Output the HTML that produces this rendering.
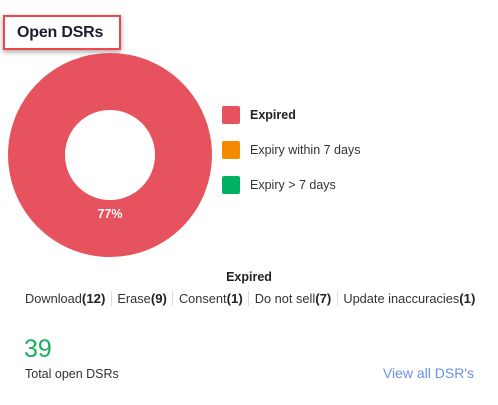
<!DOCTYPE html>
<html><head><meta charset="utf-8"><style>
body{margin:0;width:498px;height:405px;background:#fff;font-family:"Liberation Sans",sans-serif;color:#222;position:relative;overflow:hidden}
.a{position:absolute;white-space:nowrap}
.title{left:3px;top:15px;width:114px;height:31px;border:2px solid #f0474a;box-shadow:0 2px 5px rgba(0,0,0,.35);}
.title span{position:absolute;left:12px;top:7px;font-size:16px;font-weight:bold;color:#1d1d2b;letter-spacing:-0.2px}
.sq{position:absolute;left:222px;width:18px;height:18px;border-radius:2px}
.lg{left:250px;font-size:12.5px;color:#333}
.row{left:25px;top:291px;font-size:12.8px;color:#333}
.row b{font-size:13.2px;color:#222}
.sep{display:inline-block;width:1px;height:15px;background:#ddd;vertical-align:-3px;margin:0 5.5px}
</style></head><body>
<div class="a title"><span>Open DSRs</span></div>
<svg class="a" style="left:0;top:0" width="240" height="270">
<circle cx="110" cy="155" r="73.5" fill="none" stroke="#e6525d" stroke-width="57"/>
<text x="110" y="218" text-anchor="middle" font-family="Liberation Sans" font-weight="bold" font-size="12.5" fill="#fff">77%</text>
</svg>
<div class="sq" style="top:106px;background:#e6525d"></div>
<div class="sq" style="top:141px;background:#f48a00"></div>
<div class="sq" style="top:176px;background:#00b262"></div>
<div class="a lg" style="top:108px;font-weight:bold;color:#222">Expired</div>
<div class="a lg" style="top:143px">Expiry within 7 days</div>
<div class="a lg" style="top:178px">Expiry &gt; 7 days</div>
<div class="a" style="left:0;width:498px;text-align:center;top:270px;font-size:12.5px;font-weight:bold;color:#222">Expired</div>
<div class="a row">Download<b>(12)</b><span class="sep"></span>Erase<b>(9)</b><span class="sep"></span>Consent<b>(1)</b><span class="sep"></span>Do not sell<b>(7)</b><span class="sep"></span>Update inaccuracies<b>(1)</b></div>
<div class="a" style="left:24px;top:335px;font-size:25px;color:#1aaf5d">39</div>
<div class="a" style="left:25px;top:367px;font-size:12.5px;color:#333">Total open DSRs</div>
<div class="a" style="right:24px;top:365px;font-size:14px;color:#6b8ee8">View all DSR's</div>
</body></html>
